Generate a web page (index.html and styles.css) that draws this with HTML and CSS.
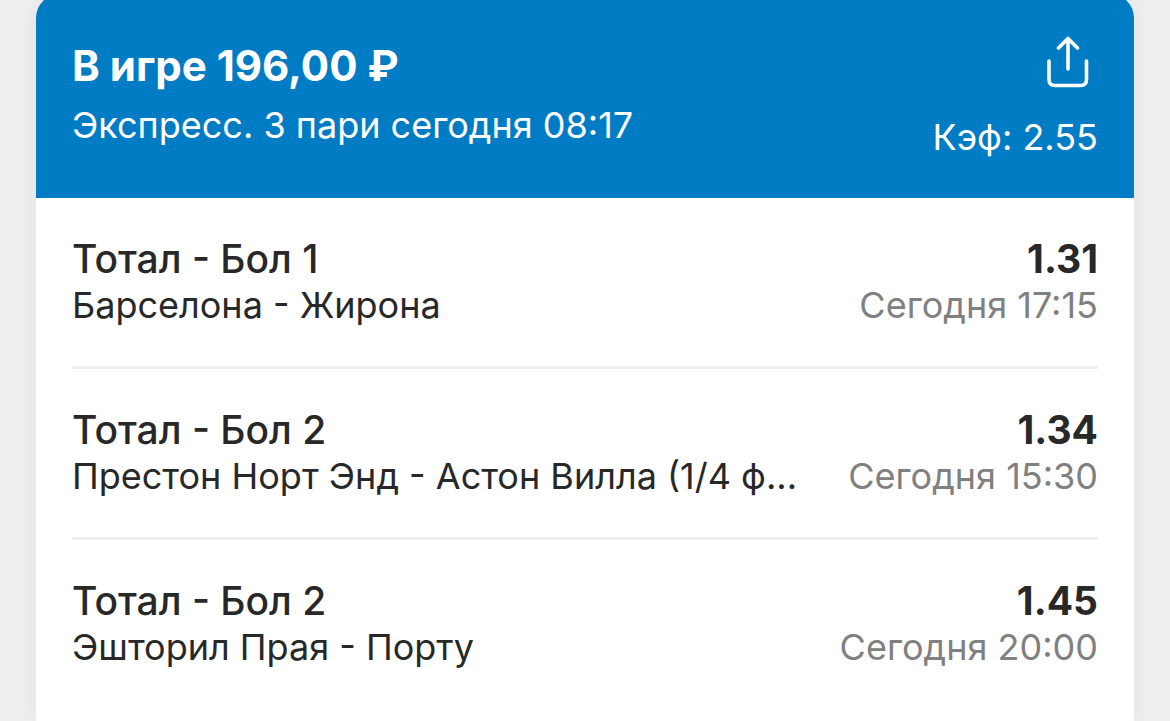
FILE: index.html
```html
<!DOCTYPE html>
<html lang="ru">
<head>
    <meta charset="UTF-8">
    <meta name="viewport" content="width=device-width, initial-scale=1.0">
    <title>Экспресс</title>
    <link rel="stylesheet" href="styles.css">
</head>
<body>
    <main class="coupon">
        <header class="coupon-header">
            <div class="summary">
                <h1>В игре 196,00 ₽</h1>
                <p>Экспресс. 3 пари сегодня 08:17</p>
            </div>
            <div class="header-side">
                <button class="share" type="button" aria-label="Поделиться">
                    <svg width="44" height="54" viewBox="0 0 44 54" fill="none" stroke="currentColor" stroke-width="3.6" stroke-linecap="round" stroke-linejoin="round">
                        <path d="M3 25V43.500Q3 49.500 9 49.500H34.500Q40.500 49.500 40.500 43.500V25"/>
                        <path d="M22 33V3M12.500 12L22 2.500L31.500 12"/>
                    </svg>
                </button>
                <p>Кэф: 2.55</p>
            </div>
        </header>
        <ul class="bets">
            <li class="bet">
                <div class="bet-info">
                    <h2>Тотал - Бол 1</h2>
                    <p>Барселона - Жирона</p>
                </div>
                <div class="bet-side">
                    <strong>1.31</strong>
                    <p>Сегодня 17:15</p>
                </div>
            </li>
            <li class="bet">
                <div class="bet-info">
                    <h2>Тотал - Бол 2</h2>
                    <p>Престон Норт Энд - Астон Вилла (1/4 ф...</p>
                </div>
                <div class="bet-side">
                    <strong>1.34</strong>
                    <p>Сегодня 15:30</p>
                </div>
            </li>
            <li class="bet">
                <div class="bet-info">
                    <h2>Тотал - Бол 2</h2>
                    <p>Эшторил Прая - Порту</p>
                </div>
                <div class="bet-side">
                    <strong>1.45</strong>
                    <p>Сегодня 20:00</p>
                </div>
            </li>
        </ul>
    </main>
</body>
</html>
```
FILE: styles.css
```css
* {
    box-sizing: border-box;
}
body {
    margin: 0;
    padding: 0 36px;
    background-color: #efefef;
    font-family: Inter, "Liberation Sans", sans-serif;
    color: #282828;
    overflow-x: hidden;
}
h1, h2, p, ul {
    margin: 0;
    padding: 0;
}
/* top edge of the card is slightly above the viewport */
.coupon {
    min-height: calc(100vh + 6px);
    margin-top: -6px;
    background-color: #fff;
    border-radius: 24px 24px 0 0;
    box-shadow: 0 0 24px rgba(0, 0, 0, 0.06);
    overflow: hidden;
}
.coupon-header {
    display: flex;
    justify-content: space-between;
    padding: 42px 36px 31px;
    background-color: #007cc5;
    color: #fff;
}
.summary {
    padding-top: 1px;
}
.coupon-header h1 {
    font-size: 42px;
    line-height: 58px;
    font-weight: 700;
}
.coupon-header p {
    font-size: 36px;
    line-height: 60px;
}
.header-side {
    display: flex;
    flex-direction: column;
    align-items: flex-end;
    gap: 17px;
}
.share {
    display: block;
    margin-right: 8px;
    padding: 0;
    border: 0;
    background: none;
    color: inherit;
    cursor: pointer;
}
.share svg {
    display: block;
}
.bets {
    list-style: none;
    padding: 0 36px;
}
.bet {
    display: flex;
    justify-content: space-between;
    gap: 48px;
    padding: 37px 0 38px;
    line-height: 47px;
    border-bottom: 3px solid #efefef;
}
.bet:last-child {
    border-bottom: 0;
}
.bet h2,
.bet strong {
    display: block;
    font-size: 39px;
    font-weight: 500;
}
.bet strong {
    font-weight: 700;
}
.bet p {
    font-size: 36px;
    line-height: 46px;
    overflow: hidden;
    text-overflow: ellipsis;
    white-space: nowrap;
}
.bet-info {
    min-width: 0;
}
.bet-side {
    flex: none;
    text-align: right;
}
.bet-side p {
    color: #808080;
}
```
